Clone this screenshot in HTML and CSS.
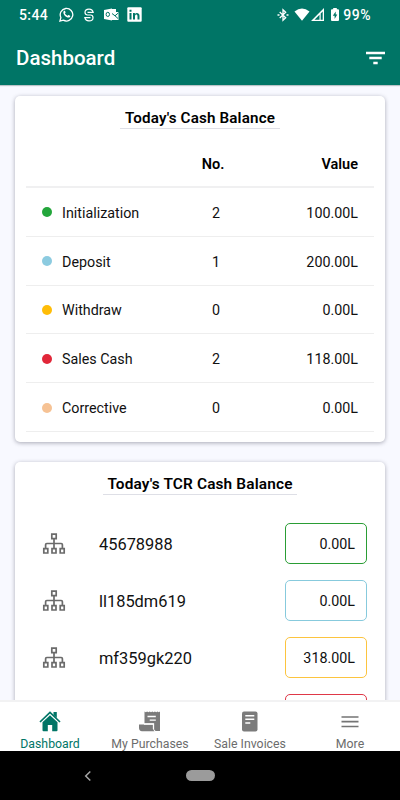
FILE: index.html
```html
<!DOCTYPE html>
<html lang="en">
<head>
<meta charset="utf-8">
<title>Dashboard</title>
<link rel="stylesheet" href="styles.css">
</head>
<body>
<svg class="sprite" aria-hidden="true">
  <symbol id="tree" viewBox="0 0 24 22">
    <g fill="none" stroke="#6b6b6b" stroke-width="1.700">
      <path d="M9.800 1.200h4.400v4.400H9.800zM1.800 15.600h4v4.400h-4zM10 15.600h4v4.400h-4zM18.200 15.600h4v4.400h-4zM12 5.600v10M3.600 15.600v-3.900q0-1.200 1.200-1.200h14.400q1.200 0 1.200 1.200v3.900"/>
    </g>
  </symbol>
</svg>
<div class="screen">
  <header class="header">
    <div class="status">
      <span class="time">5:44</span>
      <svg class="whatsapp" viewBox="0 0 16 16" width="15" height="15"><path d="M1 15l1-3.800A6.700 6.700 0 1 1 4.600 14z" fill="none" stroke="#fff" stroke-width="1.400"/><path d="M5.200 4.200c.5-.5 1-.4 1.200.1l.6 1.300c.1.5-.7 1-.6 1.300.6 1.200 1.500 1.900 2.600 2.400.4.1.8-1 1.300-.8l1.500.8c.5.3.1 1.200-.4 1.600-1.400 1.100-3.800-.1-5.200-1.600S4 5.500 5.200 4.200z" fill="#fff"/></svg>
      <svg class="sbadge" viewBox="0 0 12 14" width="12" height="14"><path d="M10 4.300C9.700 2 8.300 1.100 6 1.100S2 2.300 2 4.300 3 7 4.500 7h3C9 7 10 7.900 10 9.700S8.300 12.900 6 12.900 2.300 12 2 9.700M4.500 4.300h6.300M1.200 9.700h6.300" fill="none" stroke="#fff" stroke-width="1.200"/></svg>
      <svg class="outlook" viewBox="0 0 15 13" width="15" height="13"><path d="M0 2l8-1.500v12L0 11z" fill="#fff"/><path d="M6 1h6v3h2.500v8H8V3H6z" fill="#fff"/><ellipse cx="3.800" cy="6.400" rx="1.700" ry="2.100" fill="none" stroke="#007566" stroke-width="1"/><path d="M8 5.500l3 2.300 3.500-3M11 7.800l3 2.700" fill="none" stroke="#007566" stroke-width="1"/></svg>
      <svg class="linkedin" viewBox="0 0 15 15" width="15" height="15"><rect x=".3" y=".3" width="14.400" height="14.400" rx="1" fill="#fff"/><path d="M2.500 6h2v6.500h-2zM2.500 2.700h2v2h-2zM6 6h1.900v1c1.100-1.700 4.600-1.500 4.600 1.700v3.800h-2V9.200c0-2.200-2.500-2-2.500 0v3.300H6z" fill="#007566"/></svg>
      <span class="grow"></span>
      <svg class="bluetooth" viewBox="0 0 12 14" width="12" height="14"><path d="M2.700 4l6 5.700L6 12.300V1.700l2.700 2.600-6 5.700" fill="none" stroke="#fff" stroke-width="1.300"/><path d="M.5 6.200h2v1.600h-2zM9.500 6.200h2v1.600h-2z" fill="#fff"/></svg>
      <svg class="wifi" viewBox="0 0 16 13" width="16" height="13"><path d="M.5 3.500Q8-2.400 15.500 3.500L8 12.700z" fill="#fff"/></svg>
      <svg class="signal" viewBox="0 0 13 13" width="13" height="13"><path d="M0 13L13 0v13zM3.500 11.700h5V6.700zM9.700 5.500v6.200h2V3.500z" fill="#fff" fill-rule="evenodd"/></svg>
      <svg class="battery" viewBox="0 0 8 13" width="8" height="13"><path d="M2.200 0h3.600v1.200H7q1 0 1 1V12q0 1-1 1H1q-1 0-1-1V2.200q0-1 1-1h1.200z" fill="#fff"/><path d="M4.700 3.500L1.800 7.700h1.800v3.200l2.700-4.400H4.700z" fill="#007566"/></svg>
      <span class="percent">99%</span>
    </div>
    <div class="appbar">
      <h1>Dashboard</h1>
      <svg viewBox="0 0 19 14" width="19" height="14"><path d="M0 .7h19v2.500H0zM3.300 5.700h12.400v2.500H3.300zM7.300 10.700h4.400v2.500H7.300z" fill="#fff"/></svg>
    </div>
  </header>
  <main class="content">
    <section class="card">
      <h2>Today's Cash Balance</h2>
      <div class="row head"><span></span><span class="count">No.</span><span class="value">Value</span></div>
      <div class="row"><span class="label"><i class="dot green"></i>Initialization</span><span class="count">2</span><span class="value">100.00L</span></div>
      <div class="row"><span class="label"><i class="dot blue"></i>Deposit</span><span class="count">1</span><span class="value">200.00L</span></div>
      <div class="row"><span class="label"><i class="dot yellow"></i>Withdraw</span><span class="count">0</span><span class="value">0.00L</span></div>
      <div class="row"><span class="label"><i class="dot red"></i>Sales Cash</span><span class="count">2</span><span class="value">118.00L</span></div>
      <div class="row"><span class="label"><i class="dot peach"></i>Corrective</span><span class="count">0</span><span class="value">0.00L</span></div>
    </section>
    <section class="card tcr">
      <h2>Today's TCR Cash Balance</h2>
      <div class="device"><svg class="tree"><use href="#tree"/></svg><span class="name">45678988</span><span class="box box-green">0.00L</span></div>
      <div class="device"><svg class="tree"><use href="#tree"/></svg><span class="name">ll185dm619</span><span class="box box-blue">0.00L</span></div>
      <div class="device"><svg class="tree"><use href="#tree"/></svg><span class="name">mf359gk220</span><span class="box box-yellow">318.00L</span></div>
      <div class="device"><span class="box box-red"></span></div>
    </section>
  </main>
  <nav class="tabs">
    <div class="tab active"><svg viewBox="0 0 22 21" width="22" height="21"><path d="M1 11L11 1.500 21 11" fill="none" stroke="#007566" stroke-width="1.700"/><path d="M14.500 1h3.300v6l-3.300-3zM11 4.300l7.500 7v8q0 1-1 1h-4.300V14H8.800v6.300H4.500q-1 0-1-1v-8z" fill="#007566"/></svg><span>Dashboard</span></div>
    <div class="tab"><svg viewBox="0 0 22 21" width="22" height="21"><path d="M5.500.5l1.300.8 1.300-.8 1.300.8 1.300-.8 1.300.8 1.300-.8 1.300.8 1.300-.8 1.300.8 1.300-.8 1.300.8 1.200-.8V20h-4.500l-1.700-2v-5.500H5.500zM0 13.500h14.200v5l1.300 1.800H3Q0 20 0 17z" fill="#7b7b7b"/><path d="M8.500 5.500h8.300M10.700 9.200h6.100M5 13h9.500v5" stroke="#fff" stroke-width="1.300" fill="none"/></svg><span>My Purchases</span></div>
    <div class="tab"><svg viewBox="0 0 22 21" width="22" height="21"><rect x="3" y=".5" width="15.500" height="20" rx="2" fill="#7b7b7b"/><path d="M6.300 4.700h9M6.300 8.300h9M6.300 11.900h5" stroke="#fff" stroke-width="1.500"/></svg><span>Sale Invoices</span></div>
    <div class="tab"><svg viewBox="0 0 22 21" width="22" height="21"><path d="M2.500 6h17M2.500 10.700h17M2.500 15.500h17" stroke="#747474" stroke-width="1.700"/></svg><span>More</span></div>
  </nav>
  <footer class="system">
    <svg viewBox="0 0 8 12" width="8" height="12"><path d="M6.300 1.500L1.700 6l4.600 4.500" fill="none" stroke="#a5a5a5" stroke-width="1.500"/></svg>
    <span class="pill"></span>
    <span></span>
  </footer>
</div>
</body>
</html>
```
FILE: styles.css
```css
* { box-sizing: border-box; }
body { margin: 0; font-family: Roboto, "Liberation Sans", sans-serif; color: #111; }
.sprite { display: none; }
.screen { display: flex; flex-direction: column; width: 400px; height: 800px; overflow: hidden; background: #f8f9ff; }
svg { display: block; flex: none; }

.header { flex: none; height: 85px; background: #007566; color: #fff; box-shadow: 0 1px 1px #bbc4c8; z-index: 1; }
.status { display: flex; align-items: center; height: 29px; padding: 0 29px 0 19px; font-size: 14px; font-weight: 500; letter-spacing: .4px; }
.time { width: 40px; }
.sbadge { margin-left: 9px; }
.outlook { margin-left: 9px; }
.linkedin { margin-left: 8px; }
.grow { flex: 1; }
.wifi { margin-left: 5px; }
.signal { margin-left: 1px; }
.battery { margin: 0 4px 0 7px; }
.percent { letter-spacing: .5px; }
.appbar { display: flex; align-items: center; justify-content: space-between; height: 57px; padding: 0 15px 0 16px; }
h1 { margin: 0; font-size: 20.500px; font-weight: 500; line-height: 28px; }

.content { flex: 1; min-height: 0; overflow: hidden; padding: 11px 15px 0; }
.card { height: 346px; padding: 10px 11px 0; margin-bottom: 20px; background: #fff; border-radius: 5px; box-shadow: 0 1px 4px rgba(40, 40, 60, .38); }
h2 { width: 160px; height: 23px; margin: 0 auto; border-bottom: 1px solid #dedfe6; font-size: 15.200px; font-weight: 600; line-height: 24px; letter-spacing: .15px; text-align: center; white-space: nowrap; color: #000; }
.row { display: grid; grid-template-columns: 165px 50px 1fr; align-items: center; height: 48.800px; padding: 2px 16px 0 0; border-bottom: 1px solid #eee; font-size: 14.300px; }
.head { height: 59px; padding-top: 13px; border-bottom: 2px solid #f0f0f1; font-size: 14.500px; font-weight: 600; color: #000; }
.head .count { padding-right: 6px; }
.label { display: flex; align-items: center; }
.dot { width: 10px; height: 10px; margin: 0 10px 1px 16px; border-radius: 50%; }
.green { background: #23a63b; }
.blue { background: #8ccbe0; }
.yellow { background: #ffbd07; }
.red { background: #e12739; }
.peach { background: #f6c294; }
.count { text-align: center; }
.value { text-align: right; }

.tcr h2 { width: 194px; margin-bottom: 21px; font-size: 15.400px; }
.device { display: flex; align-items: center; height: 57px; padding: 0 7px 0 16px; }
.tree { width: 24px; height: 22px; margin-top: -1px; }
.name { margin-left: 33px; font-size: 16.400px; }
.box { width: 82px; height: 41px; margin: -2px 0 0 auto; padding-right: 11px; border: 1px solid; border-radius: 5px; color: #111; font-size: 14.300px; line-height: 41px; text-align: right; }
.box-green { border-color: #2a9d35; }
.box-blue { border-color: #87cadd; }
.box-yellow { border-color: #fcc43f; }
.box-red { border-color: #df3848; }

.tabs { display: flex; flex: none; height: 51px; border-top: 2px solid #f2f2f3; background: #fff; z-index: 1; margin-top: -1px; }
.tab { display: flex; flex: 1; flex-direction: column; align-items: center; padding-top: 9px; font-size: 12.300px; line-height: 16px; color: #6c6c6c; white-space: nowrap; }
.tab span { margin-top: 4px; }
.tab.active { color: #007566; }
.system { display: grid; grid-template-columns: 84px 1fr 84px; flex: none; align-items: center; height: 49px; background: #000; }
.system svg { margin-left: 84px; }
.pill { justify-self: center; width: 29px; height: 11px; border-radius: 6px; background: #9b9b9b; }
```
